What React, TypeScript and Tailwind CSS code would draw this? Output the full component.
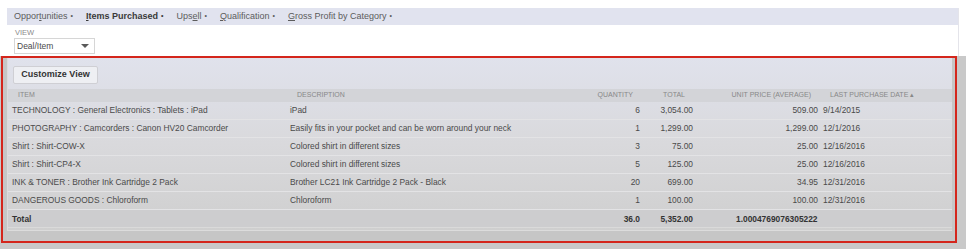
import React from "react";

const rows = [
  { item: "TECHNOLOGY : General Electronics : Tablets : iPad", desc: "iPad", qty: "6", total: "3,054.00", unit: "509.00", date: "9/14/2015" },
  { item: "PHOTOGRAPHY : Camcorders : Canon HV20 Camcorder", desc: "Easily fits in your pocket and can be worn around your neck", qty: "1", total: "1,299.00", unit: "1,299.00", date: "12/1/2016" },
  { item: "Shirt : Shirt-COW-X", desc: "Colored shirt in different sizes", qty: "3", total: "75.00", unit: "25.00", date: "12/16/2016" },
  { item: "Shirt : Shirt-CP4-X", desc: "Colored shirt in different sizes", qty: "5", total: "125.00", unit: "25.00", date: "12/16/2016" },
  { item: "INK & TONER : Brother Ink Cartridge 2 Pack", desc: "Brother LC21 Ink Cartridge 2 Pack - Black", qty: "20", total: "699.00", unit: "34.95", date: "12/31/2016" },
  { item: "DANGEROUS GOODS : Chloroform", desc: "Chloroform", qty: "1", total: "100.00", unit: "100.00", date: "12/31/2016" },
];

function Tab({ pre, u, post, bold }: { pre: string; u: string; post: string; bold?: boolean }) {
  return (
    <span className={bold ? "font-bold text-[#3a3a3a]" : "text-[#5c5c5c]"}>
      {pre}
      <span className="underline underline-offset-[1px]">{u}</span>
      {post}
      <span className="text-[7px] ml-[3px] relative top-[-1px]">•</span>
    </span>
  );
}

export default function App() {
  return (
    <div
      className="w-[966px] h-[249px] overflow-hidden bg-white relative"
      style={{ fontFamily: '"Liberation Sans", Arial, sans-serif' }}
    >
      {/* top panel */}
      <div className="pt-[8px] pl-[7px] w-[959px]">
        <div className="border-r border-[#e4e4ea] h-[48px]">
          <div className="h-[17px] bg-[#e1e3ef] flex items-center pl-[7px] gap-[13px] text-[9px] leading-[17px]">
            <Tab pre="Oppor" u="t" post="unities" />
            <Tab pre="" u="I" post="tems Purchased" bold />
            <Tab pre="Ups" u="e" post="ll" />
            <Tab pre="" u="Q" post="ualification" />
            <Tab pre="" u="G" post="ross Profit by Category" />
          </div>
          <div className="pl-[8px] pt-[4px] text-[7.5px] leading-[8px] text-[#8a8a8a]">VIEW</div>
          <div className="ml-[7px] mt-[1px] w-[81px] h-[16px] border border-[#d6d6d6] bg-white flex items-center justify-between pl-[2px] pr-[5px] text-[8.5px] text-[#4a4a4a]">
            <span>Deal/Item</span>
            <svg width="8" height="4" viewBox="0 0 8 4"><path d="M0 0 H8 L4 4 Z" fill="#5a5a5a" /></svg>
          </div>
        </div>
      </div>

      {/* lower dimmed area */}
      <div className="bg-[#c9c9c9] h-[200px]">
        <div className="ml-[1px] w-[956px] h-[187px] border-2 border-[#d4261c] bg-[#c6c6c6] pl-[4px] pr-[3px]">
          <div className="h-[173px] bg-gradient-to-b from-[#e0e2ec] via-[#d9d9dc] to-[#cfcfcf] border-b border-l border-[#dcdcdc]">
            <div className="pt-[8px] pl-[5px]">
              <div className="w-[85px] h-[18px] rounded-[2px] border border-[#cfcfd4] bg-[#eeeff3] flex items-center justify-center text-[9px] font-bold text-[#333]">
                Customize View
              </div>
            </div>
            {/* header */}
            <div className="mt-[5px] h-[13px] bg-[#d3d4d8] flex items-center text-[7px] text-[#888] uppercase">
              <div className="w-[282px] pl-[10px]">Item</div>
              <div className="w-[300px] pl-[7px]">Description</div>
              <div className="w-[50px] text-right pr-[7px]">Quantity</div>
              <div className="w-[53px] text-right pr-[8px]">Total</div>
              <div className="w-[125px] text-right pr-[7px]">Unit Price (Average)</div>
              <div className="pl-[12px]">Last Purchase Date ▴</div>
            </div>
            {rows.map((r, i) => (
              <div key={i} className="h-[18px] flex text-[8.4px] leading-[14px] text-[#4a4a4a] border-b border-[#e3e3e5]">
                <div className="w-[282px] pl-[4px] pt-[1px]">{r.item}</div>
                <div className="w-[300px] pt-[1px]">{r.desc}</div>
                <div className="w-[50px] text-right pt-[1px]">{r.qty}</div>
                <div className="w-[53px] text-right pt-[1px]">{r.total}</div>
                <div className="w-[125px] text-right pt-[1px]">{r.unit}</div>
                <div className="pl-[5px] pt-[1px]">{r.date}</div>
              </div>
            ))}
            <div className="h-[18px] flex text-[8.4px] leading-[14px] text-[#333] font-bold bg-[#cdcdcf] border-b border-[#dadada]">
              <div className="w-[282px] pl-[4px] pt-[2px]">Total</div>
              <div className="w-[300px]" />
              <div className="w-[50px] text-right pt-[2px]">36.0</div>
              <div className="w-[53px] text-right pt-[2px]">5,352.00</div>
              <div className="w-[125px] pl-[43px] pt-[2px]">1.0004769076305222</div>
            </div>
          </div>
        </div>
      </div>
    </div>
  );
}
